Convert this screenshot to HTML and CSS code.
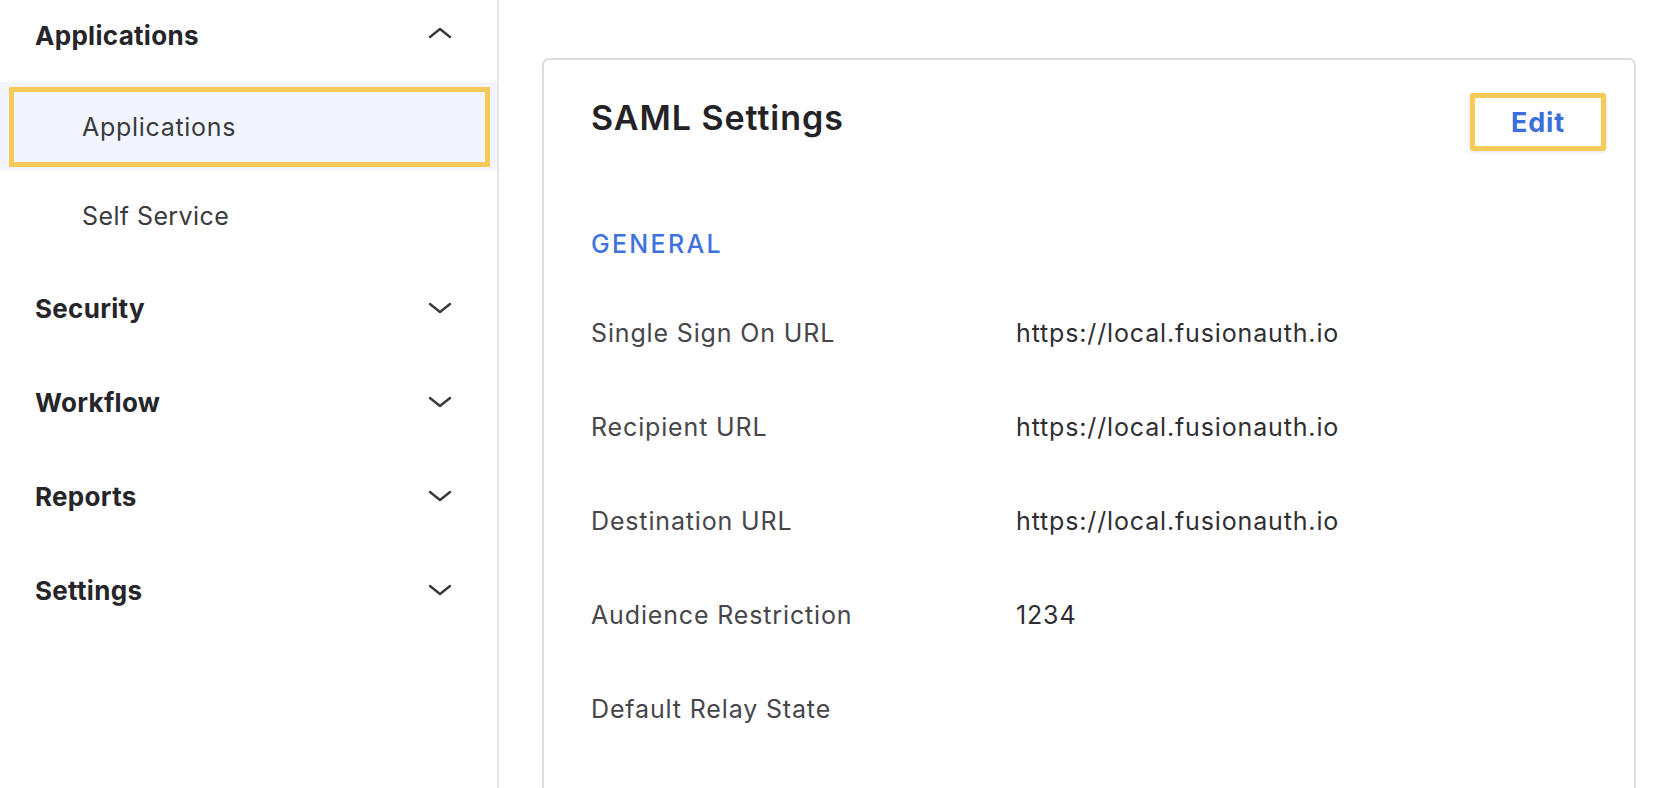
FILE: index.html
```html
<!DOCTYPE html>
<html>
<head>
<meta charset="utf-8">
<link rel="stylesheet" href="styles.css">
</head>
<body>
<div class="page">
  <nav class="sidebar">
    <div class="group-head">
      <span>Applications</span>
      <svg class="chev" viewBox="0 0 24 12"><path d="M2 10 L12 2 L22 10"/></svg>
    </div>
    <div class="sub active"><div class="sub-box">Applications</div></div>
    <div class="sub plain">Self Service</div>
    <div class="group">
      <span>Security</span>
      <svg class="chev" viewBox="0 0 24 12"><path d="M2 2 L12 10 L22 2"/></svg>
    </div>
    <div class="group">
      <span>Workflow</span>
      <svg class="chev" viewBox="0 0 24 12"><path d="M2 2 L12 10 L22 2"/></svg>
    </div>
    <div class="group">
      <span>Reports</span>
      <svg class="chev" viewBox="0 0 24 12"><path d="M2 2 L12 10 L22 2"/></svg>
    </div>
    <div class="group">
      <span>Settings</span>
      <svg class="chev" viewBox="0 0 24 12"><path d="M2 2 L12 10 L22 2"/></svg>
    </div>
  </nav>
  <main class="main">
    <section class="card">
      <div class="card-head">
        <h2 class="title">SAML Settings</h2>
        <button class="edit">Edit</button>
      </div>
      <div class="section-label">GENERAL</div>
      <div class="rows">
        <div class="row"><div class="label">Single Sign On URL</div><div class="value">https://local.fusionauth.io</div></div>
        <div class="row"><div class="label">Recipient URL</div><div class="value">https://local.fusionauth.io</div></div>
        <div class="row"><div class="label">Destination URL</div><div class="value">https://local.fusionauth.io</div></div>
        <div class="row"><div class="label">Audience Restriction</div><div class="value">1234</div></div>
        <div class="row"><div class="label">Default Relay State</div><div class="value"></div></div>
      </div>
    </section>
  </main>
</div>
</body>
</html>
```

FILE: styles.css
```css
html, body {
  margin: 0;
  padding: 0;
  background: #ffffff;
}
body {
  font-family: Inter, "Noto Sans", "Liberation Sans", sans-serif;
  color: #2d2d31;
  width: 1660px;
  height: 788px;
  overflow: hidden;
}
.page {
  display: flex;
  height: 788px;
}
.sidebar {
  width: 497px;
  flex: none;
  border-right: 2px solid #e6e6ea;
  box-sizing: content-box;
}
.group-head,
.group {
  display: flex;
  align-items: center;
  justify-content: space-between;
  padding: 0 45px 0 35px;
  font-size: 26px;
  font-weight: 700;
  color: #25252a;
  letter-spacing: 0.3px;
}
.group-head {
  height: 70px;
  margin-bottom: 12px;
}
.group {
  height: 94px;
}
.chev {
  width: 24px;
  height: 12px;
  fill: none;
  stroke: #38383d;
  stroke-width: 2.4;
  stroke-linecap: round;
  stroke-linejoin: round;
}
.group-head .chev {
  margin-top: -4px;
}
.sub {
  font-size: 25px;
  color: #3a3a3f;
  letter-spacing: 0.7px;
}
.sub.active {
  background: #f2f5fe;
  height: 88px;
  padding: 5px 7px 3px 9px;
  box-sizing: border-box;
}
.sub-box {
  height: 80px;
  box-sizing: border-box;
  border: 5px solid #f6ca56;
  display: flex;
  align-items: center;
  padding-left: 68px;
}
.sub.plain {
  height: 91px;
  display: flex;
  align-items: center;
  padding-left: 82px;
  letter-spacing: 0.4px;
}
.main {
  flex: 1;
  padding: 58px 24px 0 43px;
}
.card {
  border: 2px solid #dcdce1;
  border-radius: 7px;
  padding: 33px 28px 0 47px;
  height: 760px;
  box-sizing: border-box;
}
.card-head {
  display: flex;
  justify-content: space-between;
  align-items: center;
  height: 58px;
}
.title {
  margin: 0 0 10px 0;
  font-size: 34px;
  font-weight: 600;
  color: #232327;
  letter-spacing: 0.95px;
}
.edit {
  width: 136px;
  height: 58px;
  box-sizing: border-box;
  border: 5px solid #f6ca56;
  border-radius: 3px;
  background: #ffffff;
  color: #3b6fdc;
  font-family: Inter, "Noto Sans", "Liberation Sans", sans-serif;
  font-size: 27px;
  font-weight: 700;
  letter-spacing: 0.8px;
  box-shadow: 0 1px 4px rgba(0, 0, 0, 0.12);
  padding: 0;
}
.section-label {
  margin-top: 78px;
  height: 30px;
  line-height: 30px;
  font-size: 25px;
  font-weight: 500;
  color: #3f72de;
  letter-spacing: 2.3px;
}
.rows {
  margin-top: 27px;
}
.row {
  display: flex;
  align-items: center;
  height: 94px;
  font-size: 25px;
  letter-spacing: 0.85px;
}
.label {
  width: 425px;
  flex: none;
  color: #46464b;
}
.value {
  color: #2f2f33;
}
```
